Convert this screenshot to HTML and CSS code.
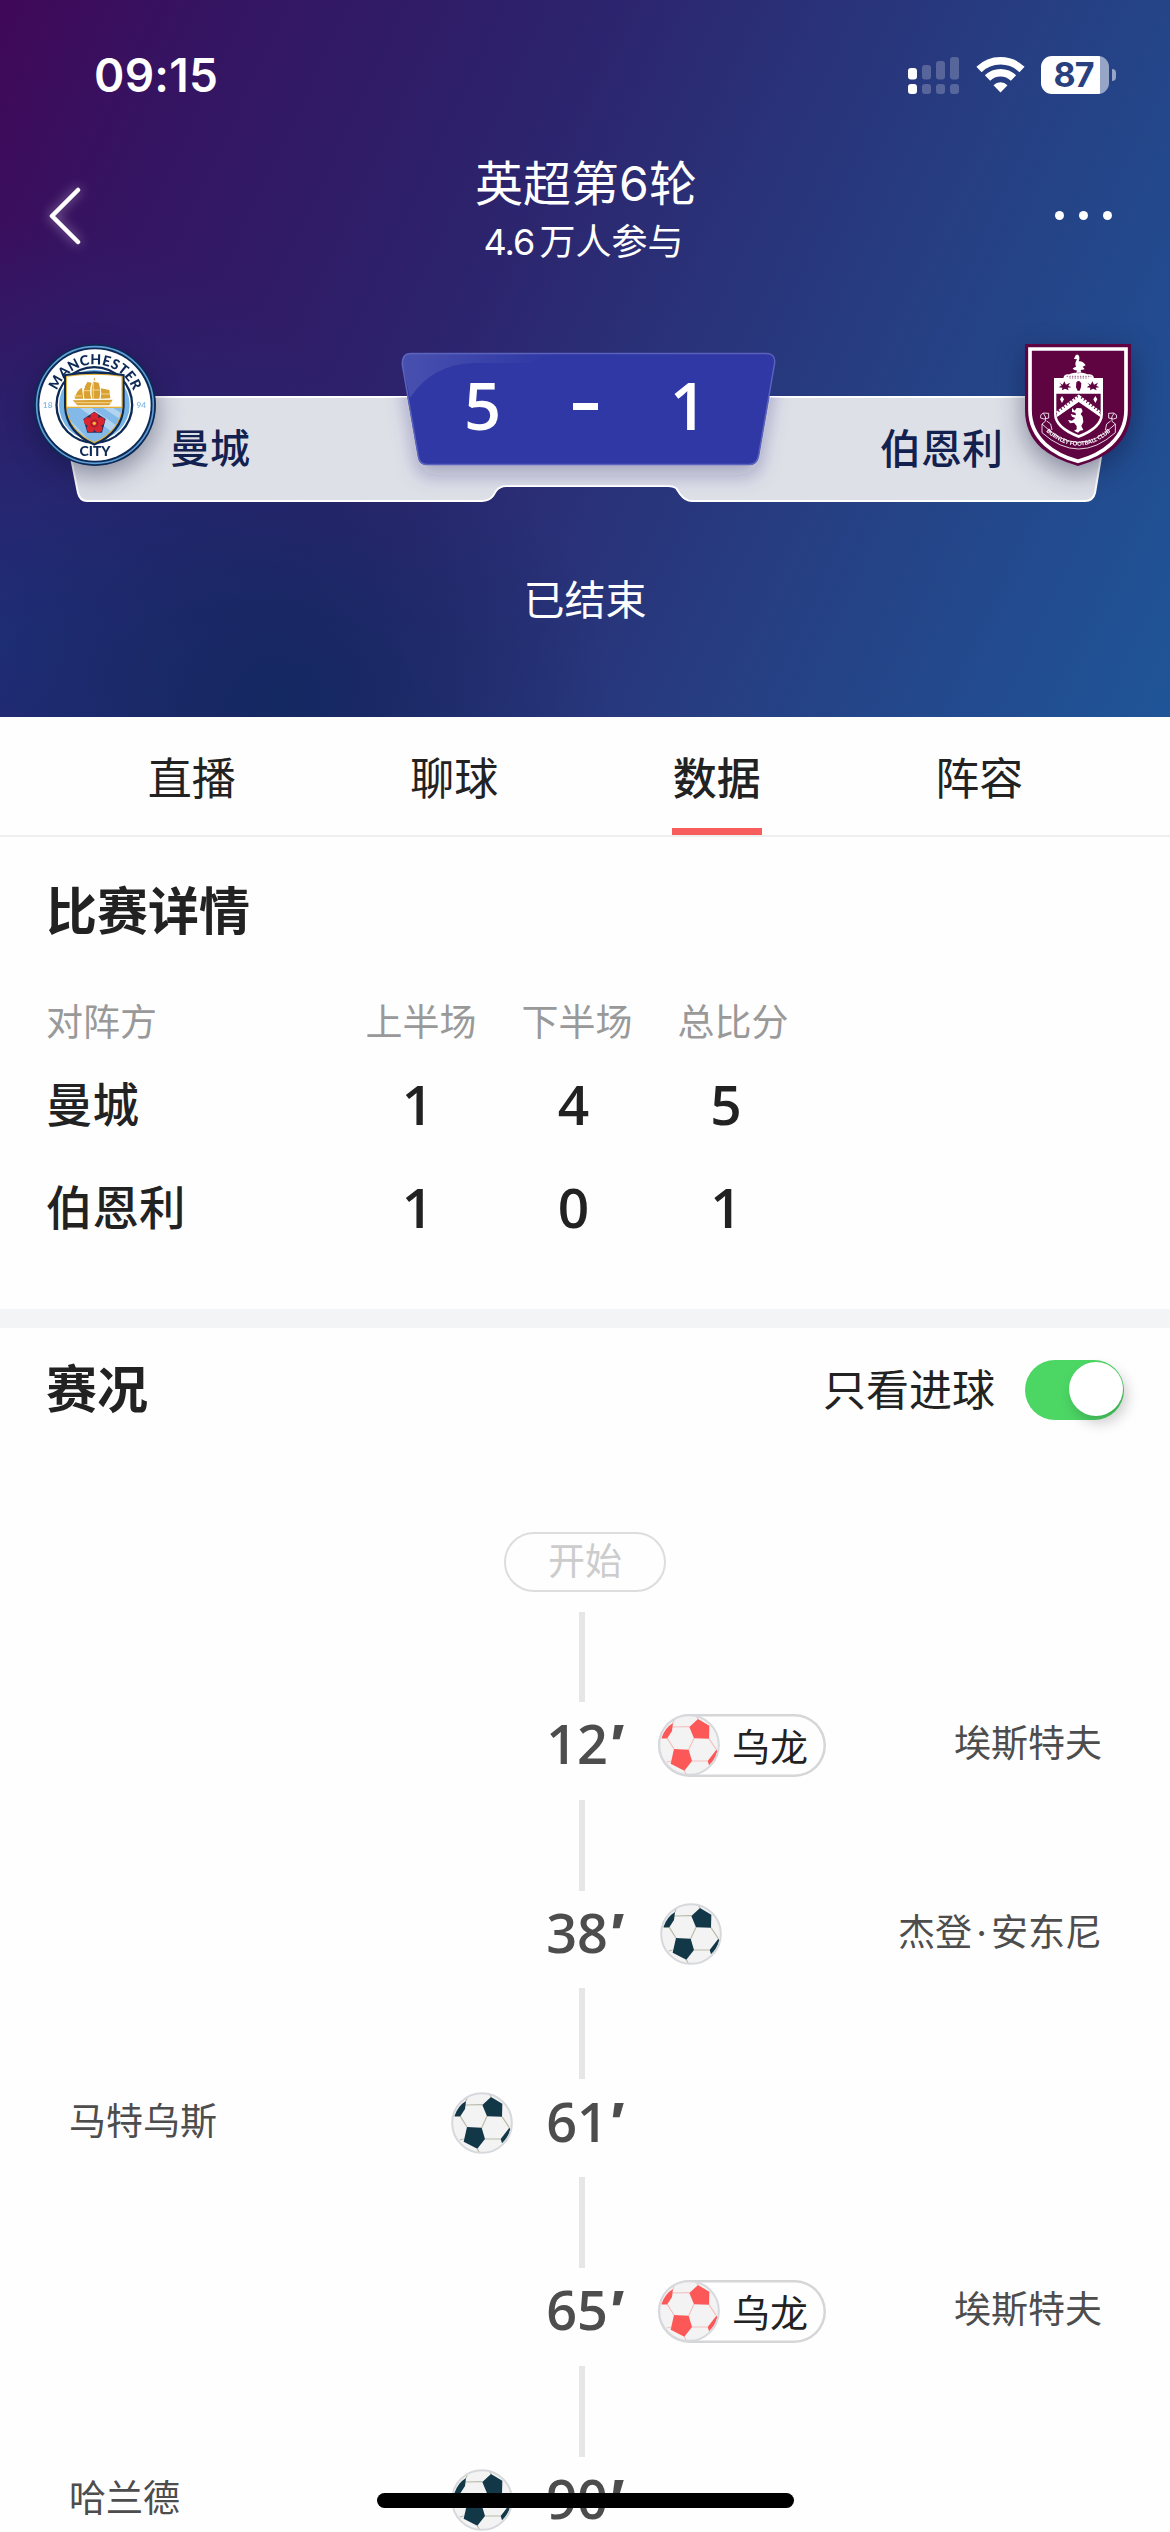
FILE: index.html
```html
<!DOCTYPE html>
<html lang="zh-CN">
<head>
    <meta charset="UTF-8">
    <meta name="viewport" content="width=device-width, initial-scale=1.0">
    <title>英超第6轮 曼城 5 - 1 伯恩利</title>
    <link rel="stylesheet" href="styles.css">
</head>
<body>

    <!-- 足球图标 -->
    <svg class="defs" width="0" height="0">
        <symbol id="ball" viewBox="0 0 186 186">
            <circle cx="93" cy="93" r="89" fill="#f3f3f4" stroke="none"/>
            <path fill="none" stroke-width="3.500" d="M42 39L94 38M28 73L48 105M108 73L92 107M153 74L175 107M102 141H149M38 141L26 144M79 170L86 184M120 15L115 5M28 73H12M45 27L48 18"/>
            <g fill="currentColor" stroke="none">
                <path d="M120 15L154 35L153 74L108 73L94 39Z"/>
                <path d="M48 105L92 107L102 141L79 170L38 149Z"/>
                <path d="M45 27L42 51L28 73H10Q20 42 45 27Z"/>
                <path d="M175 107L178 112Q172 136 153 154L149 141Z"/>
            </g>
            <circle cx="93" cy="93" r="89.500" fill="none" stroke="#d6d8dc" stroke-width="6"/>
        </symbol>
    </svg>

    <header class="match-header">
        <div class="status-bar">
            <span class="clock">09:15</span>
            <div class="status-icons">
                <svg class="signal" width="43" height="38" viewBox="0 0 43 38" fill="#fff">
                    <rect x="0" y="12" width="9" height="11.500" rx="3"/>
                    <rect x="0" y="28" width="9" height="10" rx="3"/>
                    <g opacity=".22">
                        <rect x="14" y="9" width="9" height="14.500" rx="3"/>
                        <rect x="28" y="5" width="9" height="18.500" rx="3"/>
                        <rect x="42" y="1" width="9" height="22.500" rx="3"/>
                        <rect x="14" y="28" width="9" height="10" rx="3"/>
                        <rect x="28" y="28" width="9" height="10" rx="3"/>
                        <rect x="42" y="28" width="9" height="10" rx="3"/>
                    </g>
                </svg>
                <svg class="wifi" width="49" height="37" viewBox="0 0 49 37" fill="none" stroke="#fff" stroke-width="7.500">
                    <path d="M3 13.500A31 31 0 0 1 46 13.500"/>
                    <path d="M11.500 22A18.500 18.500 0 0 1 37.500 22"/>
                    <path d="M24.500 36.500L17.500 29.200A10 10 0 0 1 31.500 29.200Z" fill="#fff" stroke="none"/>
                </svg>
                <div class="battery"><span>87</span></div>
            </div>
        </div>

        <nav class="nav-bar">
            <svg class="back" width="34" height="60" viewBox="0 0 34 60" fill="none" stroke="#fff" stroke-width="4.500" stroke-linecap="round" stroke-linejoin="round">
                <path d="M30 4L4 30L30 56"/>
            </svg>
            <div class="nav-title">
                <h1>英超第6轮</h1>
                <p><span>4.6</span>万人参与</p>
            </div>
            <div class="more"><i></i><i></i><i></i></div>
        </nav>

        <section class="scoreboard">
            <svg class="board-bg" width="1170" height="190" viewBox="0 340 1170 190">
                <defs>
                    <linearGradient id="shine" x1="0" y1="0" x2="1" y2="0">
                        <stop offset="0" stop-color="#fff" stop-opacity=".12"/>
                        <stop offset="1" stop-color="#fff" stop-opacity="0"/>
                    </linearGradient>
                    <filter id="plateShadow" x="-20%" y="-20%" width="140%" height="160%">
                        <feDropShadow dx="0" dy="10" stdDeviation="10" flood-color="#23206a" flood-opacity=".3"/>
                    </filter>
                    <clipPath id="boardClip">
                        <path d="M59 397H1111L1095 493Q1093 501 1085 501H692Q685 501 680 494L676 488Q673 486 668 486H506Q500 486 496 491L493 496Q489 501 482 501H87Q80 501 78 493Z"/>
                    </clipPath>
                </defs>
                <path d="M59 397H1111L1095 493Q1093 501 1085 501H692Q685 501 680 494L676 488Q673 486 668 486H506Q500 486 496 491L493 496Q489 501 482 501H87Q80 501 78 493Z" fill="#dee0e8" stroke="#fff" stroke-width="2"/>
                <g clip-path="url(#boardClip)">
                    <path filter="url(#plateShadow)" d="M411 353H766Q777 353 775 364L759 455Q757 465 749 465H427Q419 465 418 457L402 366Q400 353 411 353Z" fill="#2f38a4"/>
                </g>
                <path d="M411 353.500H766Q776 353.500 774.500 364L758.500 456Q757 464.500 749 464.500H427Q420 464.500 418.500 457L402.500 366Q401 353.500 411 353.500Z" fill="#2f38a4" stroke="#5a62bb" stroke-width="1.500"/>
                <path d="M411 354H550L530 363H474Q432 364 410 398L403 366Q401 354 411 354Z" fill="url(#shine)"/>
            </svg>

            <svg class="crest crest-city" width="122" height="122" viewBox="102 74 366 366">
                <defs>
                    <path id="cityArc" d="M163 257A122 122 0 0 1 407 257"/>
                    <clipPath id="cityShield"><path d="M201 172Q283 160 365 172V262Q360 332 283 368Q206 332 201 262Z"/></clipPath>
                </defs>
                <circle cx="285" cy="257" r="183" fill="#0d2a56"/>
                <circle cx="285" cy="257" r="175" fill="none" stroke="#5f9fd6" stroke-width="5"/>
                <circle cx="285" cy="257" r="167" fill="#fff"/>
                <circle cx="283" cy="257" r="117" fill="#0d2a56"/>
                <circle cx="283" cy="257" r="110" fill="#fff"/>
                <circle cx="283" cy="257" r="106" fill="#77b4e6"/>
                <path d="M192 165Q283 147 374 165V262Q370 342 283 379Q196 342 192 262Z" fill="#0d2a56"/>
                <path d="M198 170Q283 157 368 170V262Q363 335 283 372Q203 335 198 262Z" fill="#e2b13c"/>
                <g clip-path="url(#cityShield)">
                    <rect x="198" y="160" width="172" height="102" fill="#fff"/>
                    <rect x="198" y="266" width="172" height="110" fill="#82b9e8"/>
                    <path d="M198 290L280 375H250L198 320ZM240 266L365 360V330L275 266ZM310 266L370 305V285L340 266Z" fill="#b3d4f1"/>
                </g>
                <g fill="#d9a032">
                    <path d="M218 243L338 241L328 258H232Z"/>
                    <path d="M224 238Q230 212 246 205L250 238ZM253 238Q246 212 262 188L275 190Q266 215 274 238ZM277 238Q271 212 280 187L296 190Q304 214 298 238ZM302 238Q306 220 302 207L328 212L331 237Z"/>
                </g>
                <path d="M222 230H246M250 214H272M276 212H300M303 224H330M226 250H334M280 190V240" fill="none" stroke="#f3d58c" stroke-width="3"/>
                <path d="M283 184V176" stroke="#d9a032" stroke-width="3"/>
                <path d="M283 277L317 299L306 340H262L250 299Z" fill="#24305c"/>
                <g fill="#d8252f">
                    <circle cx="283" cy="292" r="12"/>
                    <circle cx="302" cy="306" r="12"/>
                    <circle cx="295" cy="327" r="12"/>
                    <circle cx="272" cy="327" r="12"/>
                    <circle cx="264" cy="306" r="12"/>
                    <circle cx="283" cy="312" r="14"/>
                </g>
                <circle cx="283" cy="312" r="10" fill="none" stroke="#5b1b34" stroke-width="2"/>
                <circle cx="283" cy="312" r="5" fill="#e8c13c"/>
                <text class="crest-text" font-size="42" text-anchor="middle"><textPath href="#cityArc" startOffset="50%" textLength="296">MANCHESTER</textPath></text>
                <text class="crest-text" x="285" y="411" font-size="42" text-anchor="middle">CITY</text>
                <text class="crest-year" x="143" y="266" font-size="25" text-anchor="middle">18</text>
                <text class="crest-year" x="424" y="266" font-size="25" text-anchor="middle">94</text>
            </svg>
            <span class="team-name home">曼城</span>
            <div class="score"><b>5</b><i></i><b>1</b></div>
            <span class="team-name away">伯恩利</span>
            <svg class="crest crest-burnley" width="106" height="122" viewBox="735 72 318 366">
                <defs>
                    <path id="clubArc" d="M797 334Q895 420 993 334"/>
                </defs>
                <path d="M735 72H1053V270Q1053 340 1003 385Q965 418 894 438Q823 418 785 385Q735 340 735 270Z" fill="#5f0440"/>
                <path d="M750 87H1038V270Q1038 330 992 373Q955 407 894 424Q833 407 796 373Q750 330 750 270Z" fill="none" stroke="#fff" stroke-width="11"/>
                <g fill="#fff">
                    <path d="M884 112Q888 100 895 105Q901 112 896 124Q908 122 917 136L908 140L914 148L902 150L904 158H888L892 151Q880 152 878 145L888 140Q883 130 891 118L882 117Z"/>
                    <path d="M850 175Q852 160 868 163Q880 155 895 160Q910 155 922 163Q940 160 942 175Z"/>
                    <path d="M822 174H969V282Q969 326 896 354Q822 326 822 282Z"/>
                </g>
                <path d="M829 221H962V282Q960 320 896 345Q831 320 829 282Z" fill="#5f0440"/>
                <path d="M860 169H934M868 174H925" stroke="#5f0440" stroke-width="2" stroke-dasharray="4 4"/>
                <path d="M838 188L848 194L853 184L858 194L870 188L865 197L874 202L863 203L866 211L855 206L846 211L847 203L836 202L845 196ZM922 188L932 194L937 184L942 194L954 188L949 197L958 202L947 203L950 211L939 206L930 211L931 203L920 202L929 196ZM889 187L894 183L899 184L904 190L903 202L899 212H893L888 202Z" fill="#5f0440"/>
                <path d="M830 282V292L896 246L962 292V282L896 230Z" fill="#fff"/>
                <path d="M832 281L896 232L960 281" fill="none" stroke="#fff" stroke-width="14" stroke-dasharray="7 3"/>
                <path d="M846 228L852 238L846 249L840 238ZM946 228L952 238L946 249L940 238Z" fill="#fff"/>
                <path d="M876 264L884 272L890 264L904 265L908 274L902 282L908 290L910 306L904 318L910 330L900 332L894 338L882 332L890 328V318L882 308L870 310L864 300L876 302L886 294L876 290L872 282L880 284L888 286L886 278L876 276Z" fill="#fff"/>
                <path d="M786 312Q896 422 1006 312L1006 338Q896 436 786 338ZM786 312L796 304Q800 290 790 280Q780 282 782 294Q790 300 806 294V280L790 279M1006 312L996 304Q992 290 1002 280Q1012 282 1010 294Q1002 300 986 294V280L1002 279M800 303L812 312L816 330M992 303L980 312L976 330" fill="none" stroke="#fff" stroke-width="2.500"/>
                <text class="scroll-text" font-size="17" text-anchor="middle"><textPath href="#clubArc" startOffset="50%">BURNLEY FOOTBALL CLUB</textPath></text>
            </svg>
        </section>

        <p class="match-status">已结束</p>
    </header>

    <ul class="tabs">
        <li>直播</li>
        <li>聊球</li>
        <li class="active">数据</li>
        <li>阵容</li>
    </ul>

    <section class="detail">
        <h2>比赛详情</h2>
        <table class="detail-table">
            <thead>
                <tr>
                    <th>对阵方</th>
                    <th>上半场</th>
                    <th>下半场</th>
                    <th>总比分</th>
                </tr>
            </thead>
            <tbody>
                <tr>
                    <th>曼城</th>
                    <td>1</td>
                    <td>4</td>
                    <td>5</td>
                </tr>
                <tr>
                    <th>伯恩利</th>
                    <td>1</td>
                    <td>0</td>
                    <td>1</td>
                </tr>
            </tbody>
        </table>
    </section>

    <section class="events">
        <div class="events-head">
            <h2>赛况</h2>
            <label>只看进球</label>
            <div class="switch"></div>
        </div>

        <div class="timeline">
            <div class="start">开始</div>
            <div class="line first"></div>

            <div class="event">
                <div class="side left"></div>
                <div class="time">12<em>'</em></div>
                <div class="side right">
                    <div class="own-goal"><svg class="ball"><use href="#ball"/></svg><span>乌龙</span></div>
                    <span class="player">埃斯特夫</span>
                </div>
            </div>
            <div class="line"></div>

            <div class="event">
                <div class="side left"></div>
                <div class="time">38<em>'</em></div>
                <div class="side right">
                    <svg class="ball"><use href="#ball"/></svg>
                    <span class="player">杰登<s>·</s>安东尼</span>
                </div>
            </div>
            <div class="line"></div>

            <div class="event">
                <div class="side left">
                    <span class="player">马特乌斯</span>
                    <svg class="ball"><use href="#ball"/></svg>
                </div>
                <div class="time">61<em>'</em></div>
                <div class="side right"></div>
            </div>
            <div class="line"></div>

            <div class="event">
                <div class="side left"></div>
                <div class="time">65<em>'</em></div>
                <div class="side right">
                    <div class="own-goal"><svg class="ball"><use href="#ball"/></svg><span>乌龙</span></div>
                    <span class="player">埃斯特夫</span>
                </div>
            </div>
            <div class="line"></div>

            <div class="event">
                <div class="side left">
                    <span class="player">哈兰德</span>
                    <svg class="ball"><use href="#ball"/></svg>
                </div>
                <div class="time">90<em>'</em></div>
                <div class="side right"></div>
            </div>
        </div>
    </section>

    <div class="home-indicator"></div>

</body>
</html>
```

FILE: styles.css
```css
* {
    box-sizing: border-box;
    margin: 0;
    padding: 0;
}

body {
    position: relative;
    width: 1170px;
    height: 2532px;
    overflow: hidden;
    background-color: #fefefe;
    color: #222;
    font-family: Inter, "Noto Sans CJK SC", sans-serif;
}

.defs {
    position: absolute;
}

/* 顶部比赛信息 */
.match-header {
    height: 717px;
    color: #fff;
    background:
        radial-gradient(ellipse 330px 300px at 280px 700px, rgba(16, 40, 94, 0.85), rgba(20, 40, 98, 0)),
        radial-gradient(ellipse 420px 420px at 0 640px, rgba(26, 52, 124, 0.8), rgba(30, 46, 118, 0)),
        linear-gradient(115deg, #400858 0%, #351462 14%, #2d226c 38%, #2a2f76 52%, #264084 72%, #1f5598 100%);
}

.status-bar {
    display: flex;
    justify-content: space-between;
    align-items: center;
    height: 149px;
    padding: 0 54px 0 94px;
}

.clock {
    font-size: 46px;
    font-weight: 600;
    letter-spacing: 0.3px;
}

.status-icons {
    display: flex;
    align-items: center;
    margin-right: 7px;
}

.signal {
    overflow: visible;
    margin-right: 25px;
}

.wifi {
    margin-right: 16px;
}

.battery {
    position: relative;
    width: 68px;
    height: 38px;
    padding-right: 3px;
    border-radius: 11px;
    background: linear-gradient(to right, #fff 59px, rgba(255, 255, 255, 0.52) 59px);
    color: #29407f;
    font-size: 34px;
    font-weight: 700;
    line-height: 38px;
    text-align: center;
    letter-spacing: -1px;
}

.battery::after {
    content: "";
    position: absolute;
    right: -7px;
    top: 13px;
    width: 4px;
    height: 12px;
    border-radius: 0 4px 4px 0;
    background-color: rgba(255, 255, 255, 0.52);
}

.nav-bar {
    display: flex;
    justify-content: space-between;
    align-items: center;
    height: 133px;
    padding: 0 58px 0 48px;
}

.back {
    filter: drop-shadow(0 0 6px rgba(255, 255, 255, 0.5));
}

.nav-title {
    flex: 1;
    padding: 0 0 10px 35px;
    text-align: center;
}

.nav-title h1 {
    font-size: 48px;
    font-weight: 400;
    line-height: 62px;
}

.nav-title p {
    padding-right: 5px;
    font-size: 36px;
    font-weight: 400;
    line-height: 54px;
}

.nav-title span {
    margin-right: 5px;
    letter-spacing: -1px;
}

.more {
    display: flex;
    gap: 15px;
}

.more i {
    width: 9px;
    height: 9px;
    border-radius: 50%;
    background-color: #fff;
}

/* 比分板 */
.scoreboard {
    position: relative;
    display: grid;
    grid-template-columns: 122px 246px 373px 250px 106px;
    height: 190px;
    margin-top: 58px;
    padding: 4px 39px 0 34px;
}

.board-bg {
    position: absolute;
    left: 0;
    top: 0;
}

.scoreboard > *:not(.board-bg) {
    position: relative;
}

.crest {
    filter: drop-shadow(0 8px 14px rgba(10, 16, 50, 0.45));
}

.crest-text {
    fill: #0d2a56;
    font-family: Lato, sans-serif;
    font-weight: 900;
}

.crest-year {
    fill: #8bbce6;
    font-family: Lato, sans-serif;
    font-weight: 700;
}

.scroll-text {
    fill: #fff;
    font-family: Lato, sans-serif;
    font-weight: 900;
}

.team-name {
    padding-top: 78px;
    color: #13214f;
    font-size: 40px;
    font-weight: 500;
    line-height: 54px;
}

.home {
    padding-left: 14px;
}

.away {
    padding-right: 22px;
    font-size: 41px;
    text-align: right;
}

.score {
    display: flex;
    align-items: center;
    justify-content: space-between;
    height: 112px;
    margin-top: 9px;
    padding: 0 68px 0 62px;
    font-family: "Open Sans", sans-serif;
    font-size: 65px;
    line-height: 112px;
}

.score b {
    margin-top: -8px;
    font-weight: 650;
}

.score i {
    width: 25px;
    height: 7px;
    margin-top: -5px;
    background-color: #fff;
}

.match-status {
    margin-top: 42px;
    font-size: 41px;
    font-weight: 400;
    line-height: 56px;
    text-align: center;
}

/* 标签栏 */
.tabs {
    display: flex;
    height: 120px;
    padding: 0 60px;
    border-bottom: 2px solid #eee;
    list-style: none;
}

.tabs li {
    position: relative;
    flex: 1;
    padding-left: 1px;
    font-size: 44px;
    line-height: 124px;
    text-align: center;
}

.tabs .active {
    font-weight: 500;
}

.tabs .active::after {
    content: "";
    position: absolute;
    left: 50%;
    bottom: 0;
    width: 90px;
    height: 7px;
    margin-left: -44px;
    background-color: #f75d5d;
}

h2 {
    font-size: 51px;
    font-weight: 700;
    line-height: 70px;
}

/* 比赛详情 */
.detail {
    height: 491px;
    padding: 40px 46px 0;
    border-bottom: 19px solid #f3f4f6;
}

.detail-table {
    width: 765px;
    margin-top: 44px;
    table-layout: fixed;
    border-collapse: collapse;
}

.detail-table th:first-child {
    width: 297px;
    text-align: left;
}

.detail-table thead th {
    height: 58px;
    color: #999;
    font-size: 37px;
    font-weight: 400;
    text-align: center;
}

.detail-table tbody th {
    height: 103px;
    padding-top: 2px;
    font-size: 46.5px;
    font-weight: 500;
}

.detail-table td {
    padding: 6px 7px 0 0;
    font-family: "Open Sans", sans-serif;
    font-size: 55px;
    font-weight: 650;
    line-height: 74px;
    text-align: center;
}

.detail-table td:last-child {
    padding-right: 14px;
}

/* 赛况 */
.events-head {
    display: flex;
    align-items: center;
    height: 124px;
    padding: 0 46px 0 46px;
}

.events-head label {
    margin-left: auto;
    padding-bottom: 6px;
    font-size: 43px;
}

.switch {
    display: flex;
    justify-content: flex-end;
    width: 99px;
    height: 60px;
    margin-left: 30px;
    padding: 2px 1px;
    border-radius: 30px;
    background-color: #4cd765;
}

.switch::after {
    content: "";
    width: 54px;
    height: 54px;
    border-radius: 50%;
    background-color: #fff;
    box-shadow: 4px 7px 14px rgba(0, 0, 0, 0.2);
}

.timeline {
    padding-top: 80px;
}

.start {
    width: 162px;
    height: 60px;
    margin: 0 auto 20px;
    border: 2px solid #ddd;
    border-radius: 30px;
    color: #ccc;
    font-size: 37px;
    line-height: 55px;
    text-align: center;
}

.line {
    width: 6px;
    height: 91.2px;
    margin-left: 579px;
    background-color: #e6e6e6;
}

.line.first {
    height: 90px;
}

.event {
    display: grid;
    grid-template-columns: 534px 96px 540px;
    align-items: center;
    height: 97.5px;
    padding-bottom: 11px;
}

.side {
    display: flex;
    align-items: center;
    justify-content: space-between;
}

.left {
    padding: 0 21px 0 69px;
}

.right {
    padding: 0 68px 0 30px;
}

.time {
    padding: 0 0 4px 3px;
    color: #4d4d4d;
    font-family: "Open Sans", sans-serif;
    font-size: 54px;
    font-weight: 650;
    line-height: 62px;
    text-align: center;
    white-space: nowrap;
}

.time em {
    font-style: italic;
    font-weight: 800;
}

.player {
    padding-bottom: 8px;
    color: #4d4d4d;
    font-size: 37px;
}

.player s {
    display: inline-block;
    width: 19px;
    text-align: center;
    text-decoration: none;
}

.ball {
    width: 62px;
    height: 62px;
    color: #123848;
    stroke: #b9bba8;
}

.own-goal {
    display: flex;
    align-items: center;
    width: 168px;
    height: 63px;
    margin-left: -2px;
    border-radius: 32px;
    box-shadow: inset 0 0 0 2.5px #d6d6d8;
    font-size: 38px;
}

.own-goal span {
    margin-left: 12px;
    padding-bottom: 2px;
}

.own-goal .ball {
    color: #fc5858;
    stroke: #f5c0c0;
}

.home-indicator {
    position: absolute;
    left: 377px;
    bottom: 24px;
    width: 417px;
    height: 15px;
    border-radius: 8px;
    background-color: #000;
}
```
